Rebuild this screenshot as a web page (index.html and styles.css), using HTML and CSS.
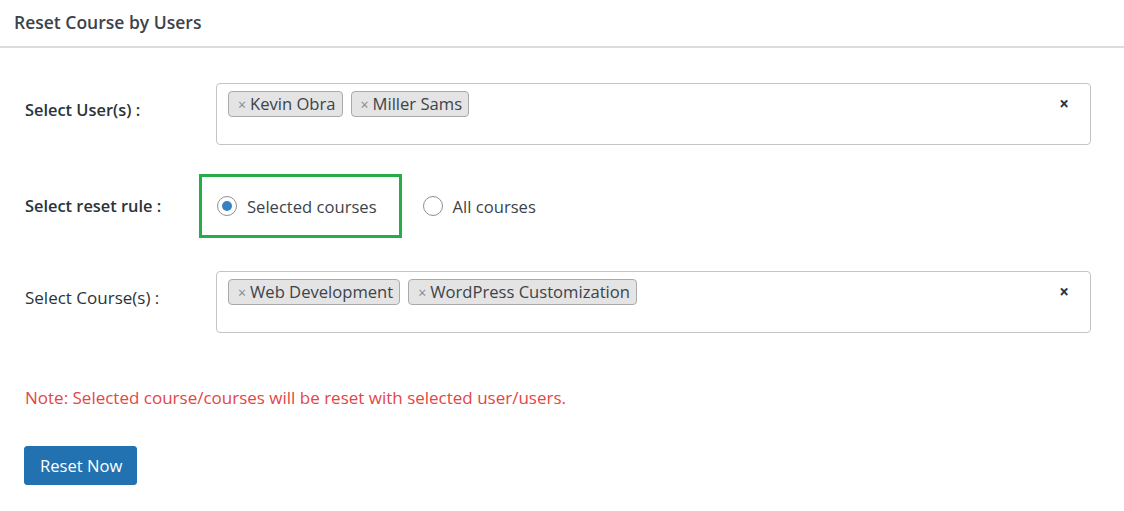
FILE: index.html
```html
<!DOCTYPE html>
<html lang="en">
<head>
<meta charset="utf-8">
<title>Reset Course by Users</title>
<link rel="stylesheet" href="styles.css">
</head>
<body>
<div class="panel">
  <div class="panel-header">Reset Course by Users</div>
  <div class="panel-body">
    <div class="row row-users">
      <div class="label">Select User(s) :</div>
      <div class="select">
        <ul class="tags">
          <li class="tag"><span class="tag-x">×</span>Kevin Obra</li>
          <li class="tag"><span class="tag-x">×</span>Miller Sams</li>
        </ul>
        <span class="clear">×</span>
      </div>
    </div>

    <div class="row row-rule">
      <div class="label">Select reset rule :</div>
      <div class="radios">
        <div class="highlight">
          <label class="radio"><span class="dot checked"></span>Selected courses</label>
        </div>
        <label class="radio radio-all"><span class="dot"></span>All courses</label>
      </div>
    </div>

    <div class="row row-courses">
      <div class="label label-thin">Select Course(s) :</div>
      <div class="select">
        <ul class="tags">
          <li class="tag"><span class="tag-x">×</span>Web Development</li>
          <li class="tag"><span class="tag-x">×</span>WordPress Customization</li>
        </ul>
        <span class="clear">×</span>
      </div>
    </div>

    <p class="note">Note: Selected course/courses will be reset with selected user/users.</p>

    <button class="btn" type="button">Reset Now</button>
  </div>
</div>
</body>
</html>
```

FILE: styles.css
```css
* { box-sizing: border-box; }

html, body {
  margin: 0;
  padding: 0;
  background: #ffffff;
}

body {
  font-family: "Open Sans", "Noto Sans", "Liberation Sans", sans-serif;
  color: #3c434a;
  font-size: 16px;
}

.panel-header {
  height: 48px;
  padding: 10px 14px 0;
  font-size: 17.5px;
  font-weight: 600;
  color: #3c434a;
  line-height: 24px;
  border-bottom: 2px solid #dcdcde;
}

.panel-body {
  padding: 35px 33px 0 25px;
}

.row {
  display: flex;
  align-items: flex-start;
}

.label {
  width: 191px;
  flex: 0 0 191px;
  font-weight: 600;
  font-size: 16.4px;
  color: #2c3338;
  line-height: 22px;
  padding-top: 16px;
}

.label-thin {
  font-weight: 400;
  font-size: 17px;
}

.select {
  flex: 1;
  height: 62px;
  border: 1px solid #c3c4c7;
  border-radius: 4px;
  display: flex;
  justify-content: space-between;
  align-items: flex-start;
  padding: 7px 21px 0 11px;
}

.tags {
  list-style: none;
  margin: 0;
  padding: 0;
  display: flex;
  gap: 8px;
}

.tag {
  height: 26px;
  line-height: 24px;
  background: #e4e4e4;
  border: 1px solid #aaaaaa;
  border-radius: 4px;
  padding: 0 6px 0 9px;
  font-size: 16.6px;
  color: #3c434a;
  white-space: nowrap;
}

.tag-x {
  color: #888;
  font-size: 14px;
  margin-right: 4px;
}

.clear {
  font-size: 17px;
  font-weight: 700;
  color: #333;
  line-height: 26px;
}

.row-rule {
  margin-top: 29px;
  align-items: center;
}

.row-rule .label {
  padding-top: 0;
}

.radios {
  display: flex;
  align-items: center;
  margin-left: -17px;
}

.highlight {
  height: 64px;
  border: 3px solid #25ad4a;
  display: flex;
  align-items: center;
  padding: 0 22px 0 15px;
}

.radio {
  display: flex;
  align-items: center;
  font-size: 16.6px;
  color: #3c434a;
}

.radio-all {
  margin-left: 21px;
}

.dot {
  width: 20px;
  height: 20px;
  border: 1px solid #8c8f94;
  border-radius: 50%;
  margin-right: 10px;
  position: relative;
  background: #fff;
}

.dot.checked::after {
  content: "";
  position: absolute;
  left: 4px;
  top: 4px;
  width: 10px;
  height: 10px;
  border-radius: 50%;
  background: #3582c4;
}

.row-courses {
  margin-top: 33px;
}

.note {
  margin: 53px 0 0;
  line-height: 24px;
  font-size: 17px;
  font-weight: 400;
  color: #e34646;
}

.btn {
  margin: 36px 0 0 -1px;
  display: block;
  height: 39px;
  padding: 0 14px 0 15px;
  background: #2271b1;
  color: #fff;
  border: 1px solid #2271b1;
  border-radius: 3px;
  font-family: inherit;
  font-size: 16.6px;
  line-height: 37px;
}
```
